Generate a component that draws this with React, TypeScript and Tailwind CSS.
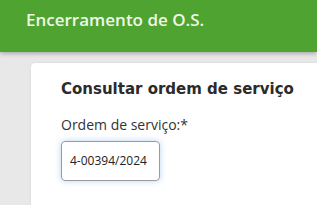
export default function App() {
  return (
    <div className="w-[317px] h-[205px] overflow-hidden bg-[#e8e8e8]">
      <div className="h-[52px] bg-[#4fa331] shadow-[0_2px_4px_rgba(0,0,0,0.25)] flex items-start pt-[9px] pl-[26px] relative z-10">
        <span className="text-[17px] font-semibold leading-[22px] text-[#eef8e6] font-['Open_Sans',sans-serif]">
          Encerramento de O.S.
        </span>
      </div>
      <div className="pl-[31px] pt-[11px]">
        <div className="bg-white rounded-tl-[4px] h-[200px] pl-[30px] pt-[16px] shadow-[0_0_3px_rgba(0,0,0,0.08)]">
          <h1 className="text-[15px] font-bold text-[#2b2b2b] leading-[20px] font-['DejaVu_Sans',sans-serif]">
            Consultar ordem de serviço
          </h1>
          <div className="mt-[16px] text-[14px] text-[#333] leading-[19px] font-['Open_Sans',sans-serif]">
            Ordem de serviço:*
          </div>
          <div className="mt-[7px] w-[99px] h-[40px] border border-[#9a9a9a] rounded-[4px] shadow-[0_0_6px_rgba(100,160,230,0.45)] flex items-center pl-[8px] overflow-hidden">
            <span className="text-[12px] text-[#222] whitespace-nowrap font-['Open_Sans',sans-serif]">4-00394/2024</span>
          </div>
        </div>
      </div>
    </div>
  );
}
